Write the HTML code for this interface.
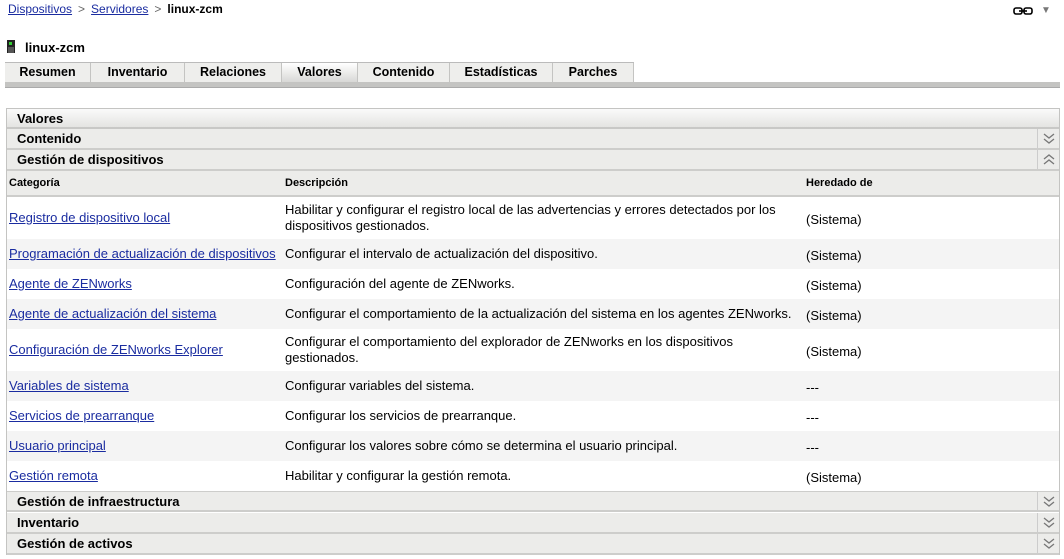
<!DOCTYPE html>
<html><head><meta charset="utf-8"><style>
*{box-sizing:border-box;margin:0;padding:0}
body{width:1064px;height:559px;background:#fff;font-family:"Liberation Sans","DejaVu Sans",sans-serif;font-size:12px;color:#000;position:relative;overflow:hidden}
a{color:#1a2ca0;text-decoration:underline}
.abs{position:absolute}
.crumb{left:8px;top:2px;font-size:12px}
.crumb b{font-weight:bold}
.crumb span{color:#666;margin:0 6px}
.title{left:8px;top:40px;font-size:13px;font-weight:bold}
.tabs{left:5px;top:62px;height:20px;width:629px;display:flex;border-top:1px solid #bbb}
.tab{height:20px;line-height:19px;text-align:center;font-weight:bold;font-size:12.5px;background:#eeeeec;border-right:1px solid #c4c4c2}
.tab.sel{background:linear-gradient(#fff,#d6d6d4)}
.band{left:5px;top:82px;width:1055px;height:6px;background:#c4c4c2;border-bottom:1px solid #aaa}
.box{left:6px;top:108px;width:1054px;height:447px;border:1px solid #c4c4c2}
.bar{position:absolute;left:0;width:1052px;height:21px;background:#ececea;border-bottom:2px solid #cdcdcb;font-weight:bold;font-size:13px;line-height:20px;padding-left:10px}
.bar .ic{position:absolute;right:0;top:0;width:22px;height:19px;border-left:1px solid #ccc}
.bar .ic svg{position:absolute;left:5px;top:4px}
.vh{top:0;height:20px;background:linear-gradient(#fafafa,#e4e4e2);border-bottom:2px solid #c8c8c6}
.row{position:absolute;left:0;width:1052px;font-size:13px;line-height:16px}
.row div{position:absolute;top:0;height:100%;display:flex;align-items:center}
.c1{left:2px}.c2{left:278px;width:515px}.c3{left:799px;padding-top:4px}
.g{background:#f4f4f4}
.hdr{background:#ececea;border-bottom:2px solid #cdcdcb;font-weight:bold;font-size:11px}
</style></head><body>
<div class="abs crumb"><a href="#">Dispositivos</a><span>&gt;</span><a href="#">Servidores</a><span>&gt;</span><b>linux-zcm</b></div>
<svg class="abs" style="left:1013px;top:6px" width="22" height="10"><rect x="1" y="2" width="8" height="6" rx="2" fill="none" stroke="#000" stroke-width="1.6"/><rect x="11" y="2" width="8" height="6" rx="2" fill="none" stroke="#000" stroke-width="1.6"/><line x1="6" y1="5" x2="14" y2="5" stroke="#000" stroke-width="1.6"/></svg>
<div class="abs" style="left:1041px;top:5px;color:#777;font-size:10px">▼</div>
<svg class="abs" style="left:7px;top:40px" width="8" height="13"><rect x="0" y="0" width="8" height="13" fill="#222"/><rect x="2" y="2" width="3" height="3" fill="#3c3"/><line x1="2" y1="7" x2="2" y2="13" stroke="#888"/><line x1="4" y1="7" x2="4" y2="13" stroke="#888"/><line x1="6" y1="7" x2="6" y2="13" stroke="#888"/></svg>
<div class="abs title" style="left:25px">linux-zcm</div>
<div class="abs tabs">
<div class="tab" style="width:86px">Resumen</div><div class="tab" style="width:94px">Inventario</div><div class="tab" style="width:97px">Relaciones</div><div class="tab sel" style="width:76px">Valores</div><div class="tab" style="width:92px">Contenido</div><div class="tab" style="width:103px">Estadísticas</div><div class="tab" style="width:81px">Parches</div>
</div>
<div class="abs band"></div>
<div class="abs box">
<div class="bar vh">Valores</div>
<div class="bar" style="top:20px">Contenido<div class="ic"><svg width="12" height="11"><path d="M1 1l5 4 5-4M1 6l5 4 5-4" fill="none" stroke="#777" stroke-width="1.3"/></svg></div></div>
<div class="bar" style="top:41px">Gestión de dispositivos<div class="ic"><svg width="12" height="11"><path d="M1 5l5-4 5 4M1 10l5-4 5 4" fill="none" stroke="#777" stroke-width="1.3"/></svg></div></div>
<div class="row hdr" style="top:62px;height:26px"><div class="c1">Categoría</div><div class="c2">Descripción</div><div class="c3" style="padding:0">Heredado de</div></div>
<div class="row" style="top:88px;height:42px"><div class="c1"><a href="#">Registro de dispositivo local</a></div><div class="c2">Habilitar y configurar el registro local de las advertencias y errores detectados por los dispositivos gestionados.</div><div class="c3">(Sistema)</div></div>
<div class="row g" style="top:130px;height:30px"><div class="c1"><a href="#">Programación de actualización de dispositivos</a></div><div class="c2">Configurar el intervalo de actualización del dispositivo.</div><div class="c3">(Sistema)</div></div>
<div class="row" style="top:160px;height:30px"><div class="c1"><a href="#">Agente de ZENworks</a></div><div class="c2">Configuración del agente de ZENworks.</div><div class="c3">(Sistema)</div></div>
<div class="row g" style="top:190px;height:30px"><div class="c1"><a href="#">Agente de actualización del sistema</a></div><div class="c2" style="width:525px;white-space:nowrap">Configurar el comportamiento de la actualización del sistema en los agentes ZENworks.</div><div class="c3">(Sistema)</div></div>
<div class="row" style="top:220px;height:42px"><div class="c1"><a href="#">Configuración de ZENworks Explorer</a></div><div class="c2" style="width:470px">Configurar el comportamiento del explorador de ZENworks en los dispositivos gestionados.</div><div class="c3">(Sistema)</div></div>
<div class="row g" style="top:262px;height:30px"><div class="c1"><a href="#">Variables de sistema</a></div><div class="c2">Configurar variables del sistema.</div><div class="c3">---</div></div>
<div class="row" style="top:292px;height:30px"><div class="c1"><a href="#">Servicios de prearranque</a></div><div class="c2">Configurar los servicios de prearranque.</div><div class="c3">---</div></div>
<div class="row g" style="top:322px;height:30px"><div class="c1"><a href="#">Usuario principal</a></div><div class="c2">Configurar los valores sobre cómo se determina el usuario principal.</div><div class="c3">---</div></div>
<div class="row" style="top:352px;height:30px"><div class="c1"><a href="#">Gestión remota</a></div><div class="c2">Habilitar y configurar la gestión remota.</div><div class="c3">(Sistema)</div></div>
<div class="bar" style="top:382px;border-top:1px solid #cdcdcb">Gestión de infraestructura<div class="ic"><svg width="12" height="11"><path d="M1 1l5 4 5-4M1 6l5 4 5-4" fill="none" stroke="#777" stroke-width="1.3"/></svg></div></div>
<div class="bar" style="top:404px">Inventario<div class="ic"><svg width="12" height="11"><path d="M1 1l5 4 5-4M1 6l5 4 5-4" fill="none" stroke="#777" stroke-width="1.3"/></svg></div></div>
<div class="bar" style="top:425px">Gestión de activos<div class="ic"><svg width="12" height="11"><path d="M1 1l5 4 5-4M1 6l5 4 5-4" fill="none" stroke="#777" stroke-width="1.3"/></svg></div></div>
</div>
</body></html>
